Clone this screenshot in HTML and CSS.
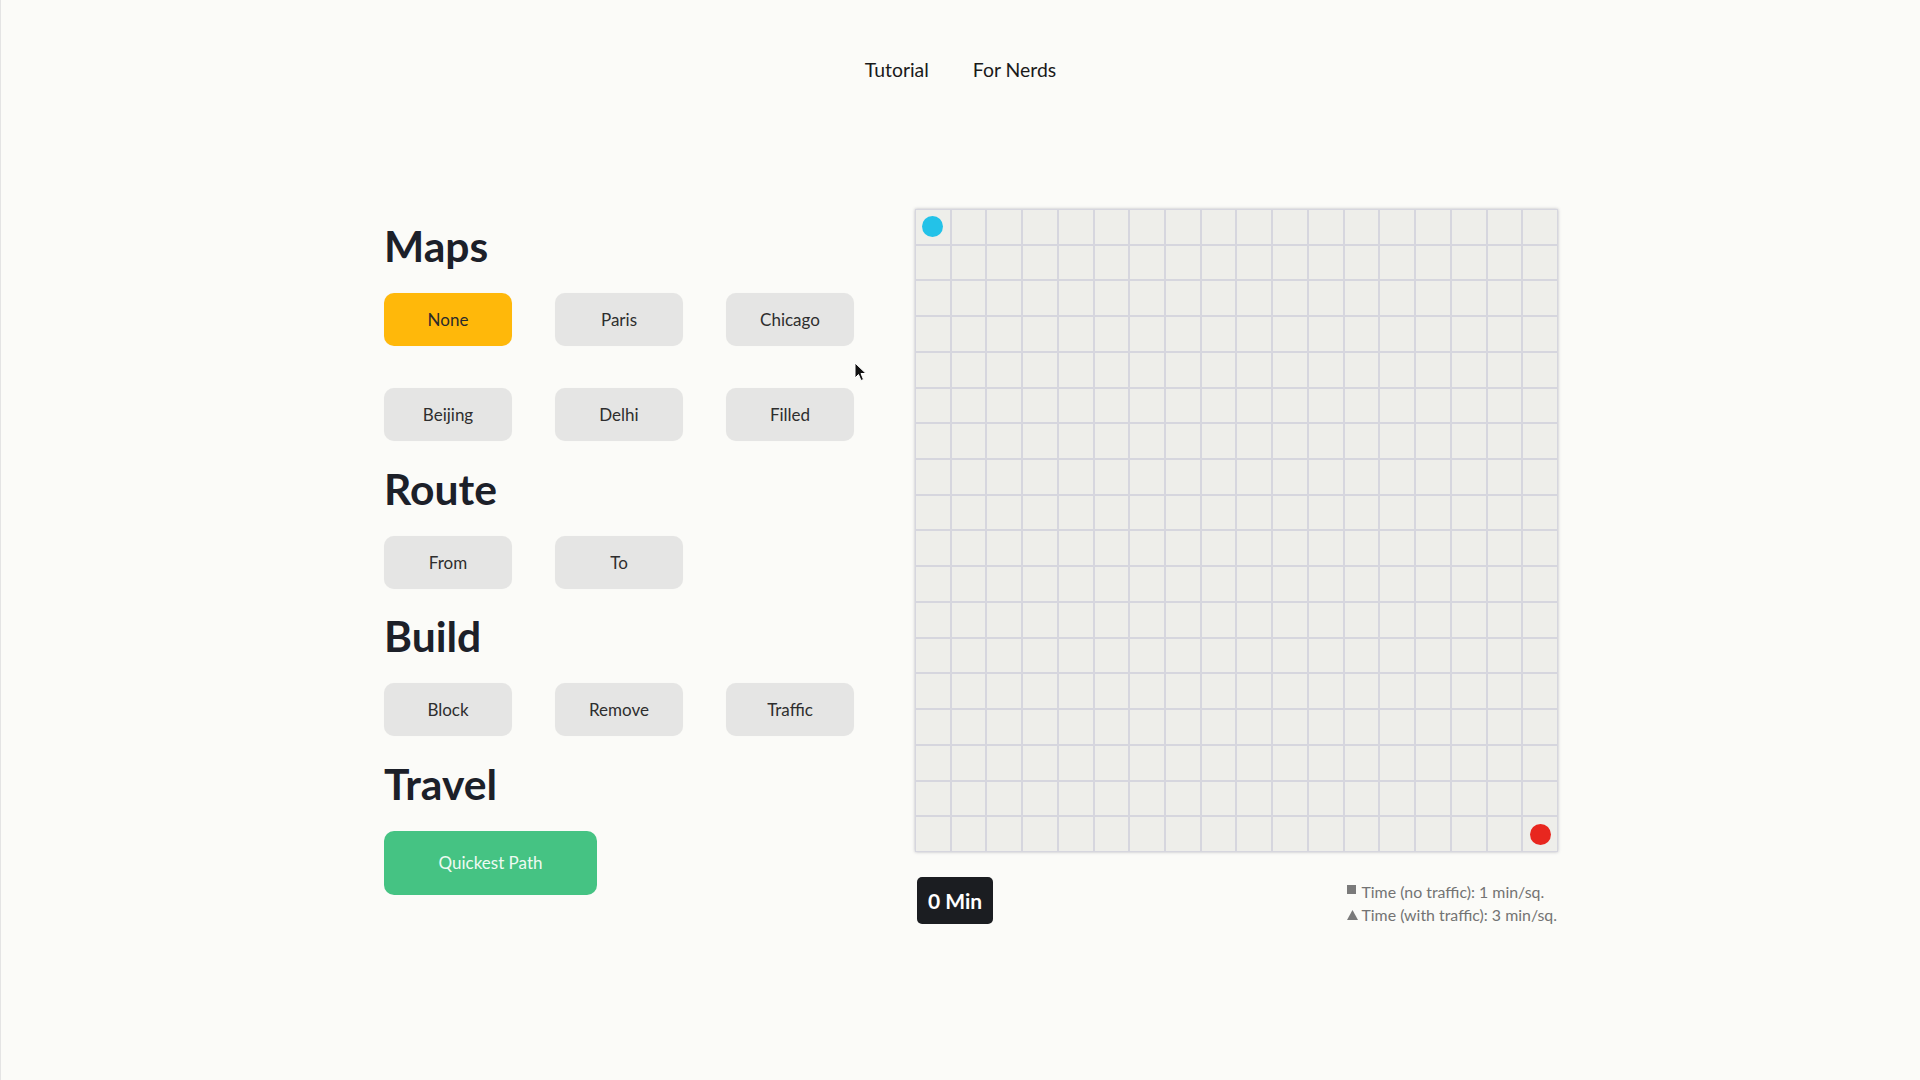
FILE: index.html
```html
<!DOCTYPE html>
<html lang="en">
<head>
<meta charset="utf-8">
<title>Pathfinder</title>
<link rel="stylesheet" href="styles.css">
</head>
<body>
<nav class="nav">
  <a class="nav-link">Tutorial</a>
  <a class="nav-link">For Nerds</a>
</nav>
<main class="main">
  <div class="controls">
    <section class="section">
      <h2 class="title">Maps</h2>
      <div class="btn-grid">
        <button class="btn btn-active">None</button>
        <button class="btn">Paris</button>
        <button class="btn">Chicago</button>
        <button class="btn">Beijing</button>
        <button class="btn">Delhi</button>
        <button class="btn">Filled</button>
      </div>
    </section>
    <section class="section">
      <h2 class="title">Route</h2>
      <div class="btn-grid">
        <button class="btn">From</button>
        <button class="btn">To</button>
      </div>
    </section>
    <section class="section">
      <h2 class="title">Build</h2>
      <div class="btn-grid">
        <button class="btn">Block</button>
        <button class="btn">Remove</button>
        <button class="btn">Traffic</button>
      </div>
    </section>
    <section class="section">
      <h2 class="title">Travel</h2>
      <button class="btn-go">Quickest Path</button>
    </section>
  </div>
  <div class="board-col">
    <div class="board" id="board"></div>
    <div class="board-foot">
      <div class="badge">0 Min</div>
      <div class="legend">
        <div class="legend-row"><span class="sq"></span>Time (no traffic): 1 min/sq.</div>
        <div class="legend-row"><svg class="tri" width="11" height="10" viewBox="0 0 11 10"><polygon points="5.5,0 11,10 0,10" fill="#7a7a7a"/></svg>Time (with traffic): 3 min/sq.</div>
      </div>
    </div>
  </div>
</main>
<svg class="cursor" width="14" height="21" viewBox="0 0 14 21"><path d="M1 1 L1 16 L4.5 12.5 L7 18.5 L9.5 17.5 L7 11.5 L12 11.5 Z" fill="#111" stroke="#fff" stroke-width="1"/></svg>
<script src="app.js"></script>
</body>
</html>
```
FILE: app.js
```js
(function(){
  var b = document.getElementById('board');
  var n = 18;
  for (var r = 0; r < n; r++) {
    for (var c = 0; c < n; c++) {
      var d = document.createElement('div');
      d.className = 'cell';
      if (r === 0 && c === 0) d.innerHTML = '<span class="dot dot-start"></span>';
      if (r === n-1 && c === n-1) d.innerHTML = '<span class="dot dot-end"></span>';
      b.appendChild(d);
    }
  }
})();
```
FILE: styles.css
```css
html, body {
  margin: 0;
  padding: 0;
}
body {
  background: #fbfbf8;
  font-family: Lato, "Open Sans", Arial, sans-serif;
  color: #1c1f26;
  min-height: 1080px;
  position: relative;
  box-shadow: inset 1px 0 0 #e4e4e4;
}
.nav {
  display: flex;
  justify-content: center;
  gap: 44px;
  padding-top: 58px;
  padding-left: 1px;
}
.nav-link {
  font-size: 19.4px;
  line-height: 23px;
  color: #1a1a1a;
}
.main {
  display: flex;
  justify-content: center;
  padding-top: 128px;
  padding-left: 22px;
}
.controls {
  width: 531px;
  padding-top: 12px;
}
.section {
  margin-bottom: 22.5px;
}
.title {
  margin: 0 0 22px;
  font-size: 42.6px;
  line-height: 50px;
  font-weight: 700;
  color: #1c2029;
}
.btn-grid {
  display: grid;
  grid-template-columns: repeat(3, 128px);
  column-gap: 43px;
  row-gap: 42px;
}
.btn {
  width: 128px;
  height: 53px;
  border: none;
  border-radius: 10px;
  background: #e5e5e4;
  font-family: Lato, "Open Sans", Arial, sans-serif;
  font-size: 17px;
  color: #2e2e2e;
  padding: 0;
  box-shadow: 0 0 1px rgba(0,0,0,0.05);
}
.btn-active {
  background: #ffb80a;
  color: #2a2a2a;
}
.btn-go {
  width: 213px;
  height: 64px;
  border: none;
  border-radius: 10px;
  background: #45c383;
  font-family: Lato, "Open Sans", Arial, sans-serif;
  font-size: 17px;
  color: #eefaf2;
  padding: 0;
}
.board-col {
  width: 643px;
}
.board {
  width: 643px;
  height: 643px;
  box-sizing: border-box;
  padding: 1px;
  display: grid;
  grid-template-columns: repeat(18, 1fr);
  grid-template-rows: repeat(18, 1fr);
  gap: 2px;
  background: #d6d6de;
  box-shadow: 0 0 3px rgba(90,90,110,0.4);
}
.cell {
  background: #eeeeea;
  display: flex;
  align-items: center;
  justify-content: center;
}
.dot {
  width: 21px;
  height: 21px;
  border-radius: 50%;
  display: block;
}
.dot-start {
  background: #23c2e8;
}
.dot-end {
  background: #e8271f;
}
.board-foot {
  margin-top: 22px;
  display: flex;
  justify-content: space-between;
  align-items: center;
}
.badge {
  margin-left: 2px;
  height: 47px;
  padding: 0 11px;
  display: flex;
  align-items: center;
  background: #1b1d21;
  color: #ffffff;
  border-radius: 5px;
  font-size: 21px;
  font-weight: 700;
}
.legend {
  margin-top: 6px;
  margin-right: 1px;
  font-size: 15.9px;
  line-height: 23px;
  color: #737373;
}
.legend-row {
  display: flex;
  align-items: center;
}
.sq {
  width: 9px;
  height: 9px;
  background: #7a7a7a;
  margin-right: 5px;
  margin-top: -4px;
}
.tri {
  margin-right: 3px;
}
.cursor {
  position: absolute;
  left: 854px;
  top: 362px;
}
```
